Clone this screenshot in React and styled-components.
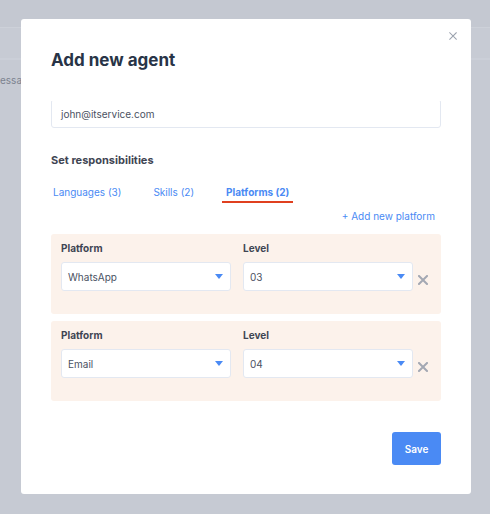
import React from 'react'
import styled, { createGlobalStyle } from 'styled-components'

const Global = createGlobalStyle`
    html, body { margin: 0; padding: 0; }
    body {
        width: 490px;
        height: 514px;
        overflow: hidden;
        background: #c6cad3;
        font-family: Inter, "Open Sans", sans-serif;
    }
`

const Page = styled.div`
    position: relative;
    width: 490px;
    height: 514px;
    background: #c6cad3;
`
const TopBar = styled.div`
    height: 27px;
    border-bottom: 1px solid #cdd1d9;
    background: #c4c8d1;
`
const SubBar = styled.div`
    height: 30px;
    border-bottom: 2px solid #cbcfd8;
    background: #c7cbd4;
`
const BackText = styled.div`
    padding: 14px 0 0 0;
    font-size: 10px;
    color: #7c828f;
`

const Modal = styled.div`
    position: absolute;
    left: 21px;
    top: 19px;
    width: 450px;
    height: 475px;
    background: #fff;
    border-radius: 3px;
    box-sizing: border-box;
    padding: 30px 30px 0 30px;
    display: flex;
    flex-direction: column;
`
const Close = styled.button`
    position: absolute;
    right: 14px;
    top: 13px;
    border: 0;
    background: none;
    padding: 0;
    width: 8px;
    height: 8px;
    display: flex;
`
const Title = styled.h2`
    margin: 0;
    font-size: 17px;
    line-height: 22px;
    font-weight: 700;
    color: #283447;
    letter-spacing: 0;
`
const Body = styled.div`
    margin-top: 30px;
    overflow: hidden;
    display: flex;
    flex-direction: column;
`
const TextInput = styled.div`
    margin-top: -2px;
    height: 29px;
    box-sizing: border-box;
    border: 1px solid #e3e8f1;
    border-radius: 3px;
    padding: 0 9px;
    display: flex;
    align-items: center;
    font-size: 10px;
    color: #4b5262;
`
const SectionTitle = styled.div`
    margin-top: 25px;
    font-size: 11px;
    font-weight: 700;
    color: #3f4553;
    line-height: 14px;
`
const Tabs = styled.div`
    margin-top: 18px;
    display: flex;
    align-items: flex-start;
    height: 18px;
`
const Tab = styled.div`
    font-size: 10px;
    line-height: 14px;
    color: #4a8af4;
    font-weight: ${p => (p.active ? 700 : 400)};
    padding: 0 ${p => (p.active ? 4 : 2)}px 2px;
    margin-right: ${p => p.gap}px;
    border-bottom: 2px solid ${p => (p.active ? '#e0401f' : 'transparent')};
`
const AddLink = styled.div`
    align-self: flex-end;
    margin: 6px 6px 0 0;
    font-size: 10px;
    line-height: 14px;
    color: #4a8af4;
`
const Cards = styled.div`
    margin-top: 11px;
    display: flex;
    flex-direction: column;
    gap: 7px;
`
const Card = styled.div`
    height: 80px;
    box-sizing: border-box;
    background: #fcf2eb;
    border-radius: 3px;
    padding: 8px 10px 0 10px;
    display: flex;
    align-items: flex-start;
`
const Field = styled.div`
    width: 170px;
    margin-right: ${p => p.gap}px;
    display: flex;
    flex-direction: column;
`
const Label = styled.div`
    font-size: 10px;
    line-height: 13px;
    font-weight: 700;
    color: #3f4553;
    margin-bottom: 7px;
`
const Select = styled.div`
    height: 29px;
    box-sizing: border-box;
    background: #fff;
    border: 1px solid #e3e8f1;
    border-radius: 3px;
    padding: 0 7px 0 6px;
    display: flex;
    align-items: center;
    justify-content: space-between;
    font-size: 10px;
    color: #4b5262;
`
const Remove = styled.button`
    margin: 33px 0 0 5px;
    border: 0;
    background: none;
    padding: 0;
    width: 10px;
    height: 10px;
    display: flex;
`
const Footer = styled.div`
    margin-top: 31px;
    display: flex;
    justify-content: flex-end;
`
const SaveButton = styled.button`
    width: 49px;
    height: 33px;
    border: 0;
    border-radius: 3px;
    background: #4a8af4;
    color: #fff;
    font-family: inherit;
    font-size: 10px;
    font-weight: 600;
`

const Arrow = () => (
    <svg width="8" height="5" viewBox="0 0 8 5">
        <path d="M0 0 H8 L4 5 Z" fill="#4a8af4" />
    </svg>
)

const Cross = ({ size, color, width }) => (
    <svg width={size} height={size} viewBox="0 0 10 10">
        <path d="M1 1 L9 9 M9 1 L1 9" stroke={color} strokeWidth={width} strokeLinecap="square" />
    </svg>
)

const rows = [
    { platform: 'WhatsApp', level: '03' },
    { platform: 'Email', level: '04' },
]

const App = () => {
    return (
        <Page>
            <Global />
            <TopBar />
            <SubBar />
            <BackText>essa</BackText>
            <Modal>
                <Close><Cross size={8} color="#9ba2ae" width={1.3} /></Close>
                <Title>Add new agent</Title>
                <Body>
                    <TextInput>john@itservice.com</TextInput>
                    <SectionTitle>Set responsibilities</SectionTitle>
                    <Tabs>
                        <Tab gap={28}>Languages (3)</Tab>
                        <Tab gap={26}>Skills (2)</Tab>
                        <Tab active>Platforms (2)</Tab>
                    </Tabs>
                    <AddLink>+ Add new platform</AddLink>
                    <Cards>
                        {rows.map(r => (
                            <Card key={r.platform}>
                                <Field gap={12}>
                                    <Label>Platform</Label>
                                    <Select>{r.platform}<Arrow /></Select>
                                </Field>
                                <Field>
                                    <Label>Level</Label>
                                    <Select>{r.level}<Arrow /></Select>
                                </Field>
                                <Remove><Cross size={10} color="#a3a8b3" width={2} /></Remove>
                            </Card>
                        ))}
                    </Cards>
                </Body>
                <Footer>
                    <SaveButton>Save</SaveButton>
                </Footer>
            </Modal>
        </Page>
    )
}

export default App
